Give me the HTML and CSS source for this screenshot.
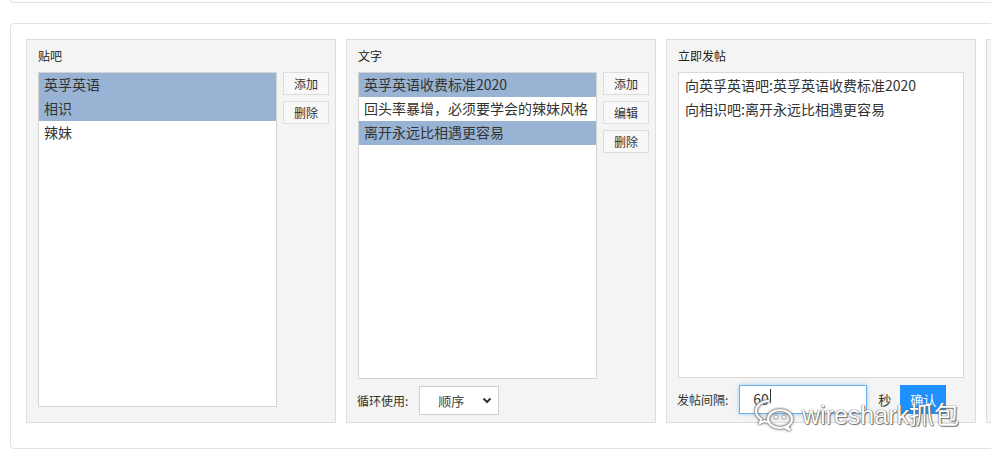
FILE: index.html
```html
<!DOCTYPE html>
<html lang="zh-CN">
  <head>
    <meta charset="UTF-8" />
    <title>贴吧发帖</title>
    <link rel="stylesheet" href="styles.css">
  </head>
  <body>
    <div class="prev-card"></div>
    <div class="card">
      <div class="panel">
        <div class="panel-title">贴吧</div>
        <div class="panel-body">
          <div class="listbox listbox-tall">
            <div class="option selected">英孚英语</div>
            <div class="option selected">相识</div>
            <div class="option">辣妹</div>
          </div>
          <div class="btn-col">
            <button class="btn">添加</button>
            <button class="btn">删除</button>
          </div>
        </div>
      </div>

      <div class="panel">
        <div class="panel-title">文字</div>
        <div class="panel-body">
          <div class="listbox">
            <div class="option selected">英孚英语收费标准2020</div>
            <div class="option">回头率暴增，必须要学会的辣妹风格</div>
            <div class="option selected">离开永远比相遇更容易</div>
          </div>
          <div class="btn-col">
            <button class="btn">添加</button>
            <button class="btn">编辑</button>
            <button class="btn">删除</button>
          </div>
        </div>
        <div class="panel-footer">
          <span class="field-label">循环使用:</span>
          <div class="select">
            <span>顺序</span>
            <svg class="chevron" width="10" height="7" viewBox="0 0 10 7">
              <path d="M1.5 1.5 L5 5 L8.5 1.5" fill="none" stroke="#333" stroke-width="2"/>
            </svg>
          </div>
        </div>
      </div>

      <div class="panel">
        <div class="panel-title">立即发帖</div>
        <div class="log">
          <div>向英孚英语吧:英孚英语收费标准2020</div>
          <div>向相识吧:离开永远比相遇更容易</div>
        </div>
        <div class="panel-footer">
          <span class="field-label">发帖间隔:</span>
          <div class="input">60<span class="caret"></span></div>
          <span class="unit">秒</span>
          <button class="btn-primary">确认</button>
        </div>
      </div>

      <div class="panel"></div>
    </div>

    <div class="watermark">
      <svg class="wm-icon" width="42" height="34" viewBox="0 0 42 34">
        <path d="M15 3 C7 3 2 8 2 13 C2 16 4 19 7 21 L6 25 L10 23 C12 24 14 24 16 24" fill="none" stroke="#fff" stroke-width="2"/>
        <ellipse cx="26" cy="21" rx="12" ry="9" fill="none" stroke="#fff" stroke-width="2"/>
        <path d="M33 28 L36 32 L30 29" fill="none" stroke="#fff" stroke-width="2"/>
        <circle cx="22" cy="19" r="1.5" fill="#fff"/>
        <circle cx="30" cy="19" r="1.5" fill="#fff"/>
      </svg>
      <span class="wm-text">wireshark抓包</span>
    </div>
  </body>
</html>
```

FILE: styles.css
```css
body {
  margin: 0;
  font-family: "Noto Sans CJK SC", "Liberation Sans", sans-serif;
  color: #333;
  background-color: #fff;
  overflow: hidden;
  width: 991px;
  height: 460px;
  position: relative;
}

.prev-card {
  margin-left: 10px;
  width: 1200px;
  height: 2px;
  border: 1px solid #e2e2e2;
  border-top: none;
  border-radius: 0 0 4px 4px;
}

.card {
  margin-top: 20px;
  margin-left: 10px;
  width: 1400px;
  padding: 15px 15px 25px 15px;
  border: 1px solid #e2e2e2;
  border-radius: 4px;
  display: flex;
  gap: 10px;
}

.panel {
  box-sizing: border-box;
  width: 310px;
  height: 384px;
  flex: none;
  padding: 7px 5px 0 11px;
  background-color: #f4f4f4;
  border: 1px solid #dedede;
  display: flex;
  flex-direction: column;
}

.panel-title {
  font-size: 12px;
  line-height: 17px;
  height: 17px;
  margin-bottom: 8px;
  color: #222;
}

.panel-body {
  display: flex;
  gap: 6px;
}

.listbox {
  box-sizing: border-box;
  width: 239px;
  height: 307px;
  background-color: #fff;
  border: 1px solid #d4d4d4;
}

.listbox-tall {
  height: 335px;
}

.option {
  height: 24px;
  line-height: 23px;
  padding-left: 5px;
  font-size: 14px;
  white-space: nowrap;
  overflow: hidden;
  color: #333;
}

.option.selected {
  background-color: #98b3d3;
}

.btn-col {
  display: flex;
  flex-direction: column;
  gap: 6px;
}

.btn {
  box-sizing: border-box;
  width: 46px;
  height: 23px;
  padding: 0;
  font-family: inherit;
  font-size: 12px;
  color: #333;
  background-color: #f8f8f8;
  border: 1px solid #dcdcdc;
}

.panel-footer {
  display: flex;
  align-items: center;
  margin-top: 7px;
}

.field-label {
  font-size: 12px;
  color: #333;
  margin-right: 11px;
  margin-left: -1px;
}

.select {
  box-sizing: border-box;
  width: 80px;
  height: 29px;
  background-color: #fff;
  border: 1px solid #cfcfcf;
  display: flex;
  align-items: center;
  justify-content: space-between;
  padding: 0 6px 0 18px;
  font-size: 13px;
  color: #444;
}

.log {
  box-sizing: border-box;
  width: 286px;
  height: 306px;
  background-color: #fff;
  border: 1px solid #d9d9d9;
  padding: 0 6px;
  font-size: 14px;
  line-height: 24px;
  color: #333;
}

.input {
  box-sizing: border-box;
  width: 128px;
  height: 29px;
  border: 1px solid #66afe9;
  box-shadow: 0 0 4px rgba(102, 175, 233, 0.6);
  background-color: #fff;
  padding-left: 13px;
  font-size: 14px;
  line-height: 27px;
  display: flex;
  align-items: center;
}

.caret {
  display: inline-block;
  width: 1px;
  height: 14px;
  margin-left: 1px;
  background-color: #333;
  align-self: flex-start;
  margin-top: 3px;
}

.unit {
  font-size: 13px;
  margin-left: 11px;
  margin-right: 9px;
}

.btn-primary {
  width: 46px;
  height: 29px;
  padding: 0;
  border: none;
  background-color: #1e90ff;
  color: #fff;
  font-family: inherit;
  font-size: 13px;
}

.watermark {
  position: absolute;
  left: 754px;
  top: 398px;
  display: flex;
  align-items: center;
  gap: 6px;
  pointer-events: none;
}

.wm-icon {
  filter: drop-shadow(0 0 1px #666) drop-shadow(0 0 1px #888);
}

.wm-text {
  font-family: "Liberation Sans", "Noto Sans CJK SC", sans-serif;
  font-size: 25px;
  line-height: 30px;
  color: #fff;
  text-shadow: 0 0 1px #555, 0 0 1px #555, 1px 1px 1px #777;
}
```
